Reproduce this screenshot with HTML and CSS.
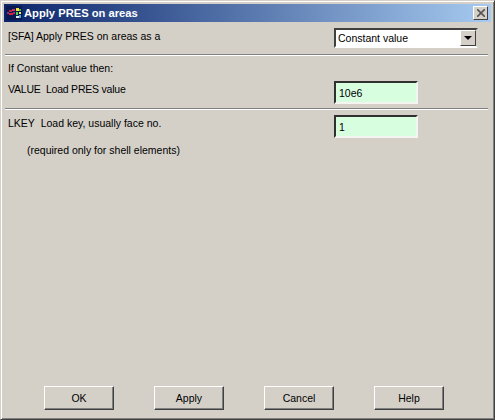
FILE: index.html
```html
<!DOCTYPE html>
<html lang="en">
<head>
    <meta charset="UTF-8">
    <title>Apply PRES on areas</title>
    <link rel="stylesheet" href="styles.css">
</head>
<body>
    <div class="window">
        <div class="titlebar">
            <svg class="app-icon" width="16" height="14" viewBox="0 0 16 14">
                <rect width="16" height="14" fill="#0a1a50"/>
                <rect x="1" y="6" width="2" height="2" fill="#7a3a8a"/>
                <rect x="3" y="4" width="3" height="2" fill="#c02040"/>
                <rect x="3" y="7" width="4" height="2" fill="#e02040"/>
                <rect x="6" y="3" width="3" height="2" fill="#d03060"/>
                <rect x="7" y="6" width="2" height="2" fill="#a03070"/>
                <rect x="10" y="2" width="3" height="3" fill="#f0e040"/>
                <rect x="13" y="3" width="2" height="2" fill="#40c040"/>
                <rect x="10" y="6" width="2" height="3" fill="#50d050"/>
                <rect x="13" y="6" width="2" height="2" fill="#f0f060"/>
                <rect x="10" y="10" width="3" height="2" fill="#e8e8e8"/>
                <rect x="13" y="9" width="2" height="3" fill="#40b0e0"/>
            </svg>
            <span class="title">Apply PRES on areas</span>
            <button class="close">
                <svg width="8" height="8" viewBox="0 0 8 8">
                    <path d="M0 0L8 8M8 0L0 8" stroke="#555" stroke-width="1.6"/>
                </svg>
            </button>
        </div>

        <div class="section section-first">
            <span class="label label-first">[SFA] Apply PRES on areas as a</span>
            <div class="select">
                <span class="select-value">Constant value</span>
                <span class="select-arrow"></span>
            </div>
        </div>

        <div class="section section-value">
            <p class="note">If Constant value then:</p>
            <div class="row row-value">
                <span class="label label-value">VALUE&nbsp; Load PRES value</span>
                <input class="field" type="text" value="10e6">
            </div>
        </div>

        <div class="section section-key">
            <div class="row">
                <span class="label label-key">LKEY&nbsp; Load key, usually face no.</span>
                <input class="field" type="text" value="1">
            </div>
            <p class="hint">(required only for shell elements)</p>
        </div>

        <div class="buttons">
            <button class="btn">OK</button>
            <button class="btn">Apply</button>
            <button class="btn">Cancel</button>
            <button class="btn">Help</button>
        </div>
    </div>
</body>
</html>
```

FILE: styles.css
```css
* {
    margin: 0;
    padding: 0;
    box-sizing: border-box;
    font-family: "Liberation Sans", Arial, sans-serif;
    font-size: 10.5px;
}
body {
    background-color: #d4d0c8;
    color: #000;
}
.window {
    width: 495px;
    height: 420px;
    display: flex;
    flex-direction: column;
    padding: 4px 3px 3px 4px;
    background: #d4d0c8;
    border: 1px solid;
    border-color: #d4d0c8 #404040 #404040 #d4d0c8;
    box-shadow: inset 1px 1px 0 #fff, inset -1px -1px 0 #808080;
}
.titlebar {
    height: 18px;
    margin: -1px 0 0 -1px;
    display: flex;
    align-items: center;
    padding: 0 3px 0 2px;
    background: linear-gradient(90deg, #0a246a, #a6caf0);
    flex-shrink: 0;
}
.app-icon {
    flex-shrink: 0;
}
.title {
    margin-left: 2px;
    color: #fff;
    font-weight: bold;
    font-size: 11.2px;
}
.close {
    margin-left: auto;
    width: 15px;
    height: 14px;
    display: flex;
    align-items: center;
    justify-content: center;
    background: #d4d0c8;
    border: 1px solid;
    border-color: #fff #404040 #404040 #fff;
}
.section {
    padding: 0 7px 0 3px;
    margin-right: 3px;
    border-bottom: 1px solid #808080;
    box-shadow: 0 1px 0 #fff;
    flex-shrink: 0;
}
.section-first {
    height: 33px;
    display: flex;
    align-items: flex-start;
    justify-content: space-between;
    padding-top: 6px;
}
.section-value {
    height: 54px;
    padding-top: 7px;
}
.section-key {
    border-bottom: 0;
    box-shadow: none;
    padding-top: 6px;
}
.row {
    display: flex;
    justify-content: space-between;
    align-items: flex-start;
}
.row-value {
    margin-top: 6px;
}
.note,
.label,
.hint {
    line-height: 13px;
}
.label-first {
    margin-top: 2px;
}
.label-value {
    margin-top: 2px;
    letter-spacing: -0.22px;
}
.label-key {
    margin-top: 2px;
}
.select {
    width: 144px;
    height: 20px;
    display: flex;
    align-items: center;
    justify-content: space-between;
    background: #fff;
    border: 2px solid;
    border-color: #404040 #d4d0c8 #fff #404040;
    margin-right: 3px;
}
.select-value {
    padding-left: 2px;
}
.select-arrow {
    width: 16px;
    height: 16px;
    background: #d4d0c8;
    border: 1px solid;
    border-color: #fff #404040 #404040 #fff;
    position: relative;
}
.select-arrow::after {
    content: "";
    position: absolute;
    left: 3px;
    top: 5px;
    border-style: solid;
    border-width: 4px 4px 0;
    border-color: #000 transparent transparent;
}
.field {
    width: 84px;
    height: 23px;
    padding: 0 3px;
    margin-right: 63px;
    background: #d8fee0;
    border: 2px solid;
    border-color: #303030 #f4f4f0 #f4f4f0 #303030;
    outline: 0;
    color: #000;
}
.hint {
    margin: 6px 0 0 19px;
}
.buttons {
    margin-top: auto;
    padding: 0 0 6px 39px;
    display: flex;
    gap: 40px;
}
.btn {
    width: 70px;
    height: 24px;
    background: #d4d0c8;
    border: 1px solid;
    border-color: #fff #404040 #404040 #fff;
    box-shadow: inset -1px -1px 0 #808080;
    color: #000;
}
```
